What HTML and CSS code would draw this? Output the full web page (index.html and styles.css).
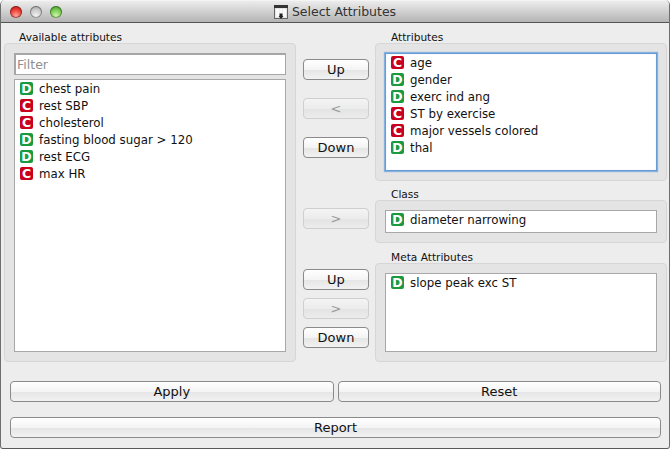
FILE: index.html
```html
<!DOCTYPE html>
<html lang="en">
<head>
<meta charset="utf-8">
<title>Select Attributes</title>
<link rel="stylesheet" href="styles.css">
</head>
<body>
<div class="window">
  <header class="titlebar">
    <div class="lights">
      <span class="light red"></span>
      <span class="light grey"></span>
      <span class="light green"></span>
    </div>
    <div class="title">
      <svg class="title-icon" width="14" height="14" viewBox="0 0 14 14">
        <rect x="0.5" y="0.5" width="13" height="13" fill="#e4e4e4" stroke="#666"/>
        <rect x="0" y="0" width="14" height="3" fill="#333"/>
        <rect x="2" y="4" width="3" height="8" fill="#fafafa"/>
        <rect x="5.5" y="4" width="3" height="5" fill="#fafafa"/>
        <rect x="9" y="4" width="3" height="8" fill="#fafafa"/>
        <path d="M5.500 8.500h3v2.500h1L7 14 4.500 11h1z" fill="#222"/>
      </svg>
      <span>Select Attributes</span>
    </div>
  </header>

  <main class="content">
    <section class="column left-col">
      <h2 class="label">Available attributes</h2>
      <div class="group grow">
        <input class="filter" type="text" placeholder="Filter">
        <ul class="list grow">
          <li><span class="tag d">D</span>chest pain</li>
          <li><span class="tag c">C</span>rest SBP</li>
          <li><span class="tag c">C</span>cholesterol</li>
          <li><span class="tag d">D</span>fasting blood sugar &gt; 120</li>
          <li><span class="tag d">D</span>rest ECG</li>
          <li><span class="tag c">C</span>max HR</li>
        </ul>
      </div>
    </section>

    <section class="middle">
      <button class="btn top-first">Up</button>
      <button class="btn gap-18" disabled>&lt;</button>
      <button class="btn gap-18">Down</button>
      <button class="btn gap-50" disabled>&gt;</button>
      <button class="btn gap-40">Up</button>
      <button class="btn gap-8" disabled>&gt;</button>
      <button class="btn gap-8">Down</button>
    </section>

    <section class="column right-col">
      <h2 class="label">Attributes</h2>
      <div class="group attrs">
        <ul class="list focused grow">
          <li><span class="tag c">C</span>age</li>
          <li><span class="tag d">D</span>gender</li>
          <li><span class="tag d">D</span>exerc ind ang</li>
          <li><span class="tag c">C</span>ST by exercise</li>
          <li><span class="tag c">C</span>major vessels colored</li>
          <li><span class="tag d">D</span>thal</li>
        </ul>
      </div>
      <h2 class="label spaced">Class</h2>
      <div class="group">
        <ul class="list class-list">
          <li><span class="tag d">D</span>diameter narrowing</li>
        </ul>
      </div>
      <h2 class="label spaced-more">Meta Attributes</h2>
      <div class="group grow">
        <ul class="list grow">
          <li><span class="tag d">D</span>slope peak exc ST</li>
        </ul>
      </div>
    </section>
  </main>

  <footer class="actions">
    <div class="action-row">
      <button class="btn wide">Apply</button>
      <button class="btn wide">Reset</button>
    </div>
    <div class="action-row">
      <button class="btn wide">Report</button>
    </div>
  </footer>
</div>
</body>
</html>
```

FILE: styles.css
```css
* { box-sizing: border-box; }

html, body {
  margin: 0;
  height: 100%;
  background: #fff;
}

body {
  font-family: "DejaVu Sans", "Liberation Sans", sans-serif;
  font-size: 11.8px;
  color: #111;
  overflow: hidden;
}

.window {
  width: 670px;
  height: 449px;
  display: flex;
  flex-direction: column;
  background: #ededed;
  border-left: 1px solid #6e6e6e;
  border-right: 1px solid #6e6e6e;
  border-bottom: 1px solid #5a5a5a;
  border-radius: 5px 5px 3px 3px;
  overflow: hidden;
}

.titlebar {
  position: relative;
  height: 23px;
  flex: none;
  display: flex;
  align-items: center;
  justify-content: center;
  background: linear-gradient(#ececec, #d6d6d6 40%, #b4b4b4);
  border-bottom: 1px solid #555;
  border-top: 1px solid #f4f4f4;
}

.lights {
  position: absolute;
  left: 9px;
  top: 5px;
  display: flex;
  gap: 8px;
}

.light {
  width: 12px;
  height: 12px;
  border-radius: 50%;
  box-shadow: inset 0 0 0 1px rgba(0, 0, 0, .35);
}

.light.red { background: radial-gradient(circle at 50% 80%, #ffa59a, #ea3a30 55%, #b01410); }
.light.grey { background: radial-gradient(circle at 50% 80%, #f4f4f4, #c8c8c8 55%, #8e8e8e); }
.light.green { background: radial-gradient(circle at 50% 80%, #cff8aa, #74c850 55%, #2e8a1c); }

.title {
  display: flex;
  align-items: center;
  gap: 4px;
  font-size: 12.5px;
  color: #333;
}

.title-icon { display: block; }

.content {
  display: flex;
  height: 339px;
  flex: none;
  padding: 7px 0 0 3px;
}

.column {
  display: flex;
  flex-direction: column;
}

.left-col { width: 292px; }
.right-col { width: 292px; }

.label {
  height: 13px;
  margin: 0 0 0 15px;
  font-size: 10.6px;
  line-height: 14px;
  font-weight: 400;
  color: #111;
}

.label.spaced { margin-top: 6px; }
.label.spaced-more { margin-top: 7px; }
.right-col .label { margin-left: 16px; }

.group {
  display: flex;
  flex-direction: column;
  gap: 4px;
  padding: 9px;
  background: #e4e4e4;
  border: 1px solid #d6d6d6;
  border-radius: 4px;
}

.group.attrs { height: 138px; flex: none; }
.grow { flex: 1; min-height: 0; }

.filter {
  height: 22px;
  flex: none;
  padding: 0 1px;
  font: 12.5px "DejaVu Sans", sans-serif;
  background: #fff;
  border: 2px solid #a6a6a6;
  border-bottom-width: 1px;
  border-right-width: 1px;
  border-radius: 0;
  outline: none;
}

.filter::placeholder { color: #8f8f8f; opacity: 1; }

.list {
  margin: 0;
  padding: 0 0 0 5px;
  list-style: none;
  background: #fff;
  border: 1px solid #a8a8a8;
}

.list.focused {
  border: 1px solid #6a9cd4;
  box-shadow: 0 0 1px 1px #86b0de, inset 0 0 1px #a9c8ea;
}

.list.class-list {
  height: 23px;
}

.list li {
  display: flex;
  align-items: center;
  height: 17px;
  white-space: nowrap;
}

.tag {
  flex: none;
  width: 13px;
  height: 13px;
  margin-right: 6px;
  border-radius: 2px;
  color: #fff;
  font-size: 12.5px;
  font-weight: 700;
  line-height: 13px;
  text-align: center;
}

.tag.d { background: #199a3f; }
.tag.c { background: #c8001e; }

.middle {
  width: 66px;
  flex: none;
  margin: 0 6px 0 7px;
  display: flex;
  flex-direction: column;
}

.btn {
  height: 21px;
  flex: none;
  padding: 0;
  font: 13px "DejaVu Sans", sans-serif;
  color: #111;
  background: linear-gradient(#ffffff, #f4f4f4 50%, #e6e6e6 55%, #f2f2f2);
  border: 1px solid #8a8a8a;
  border-radius: 4px;
}

.btn:disabled {
  color: #999;
  background: linear-gradient(#f4f4f4, #ececec 50%, #e4e4e4 55%, #ececec);
  border-color: #cfcfcf;
}

.top-first { margin-top: 29px; }
.gap-18 { margin-top: 18px; }
.gap-50 { margin-top: 50px; }
.gap-40 { margin-top: 40px; }
.gap-8 { margin-top: 8px; }

.actions {
  display: flex;
  flex-direction: column;
  gap: 15px;
  padding: 19px 8px 0 9px;
}

.action-row {
  display: flex;
  gap: 4px;
}

.wide { flex: 1; }
```
